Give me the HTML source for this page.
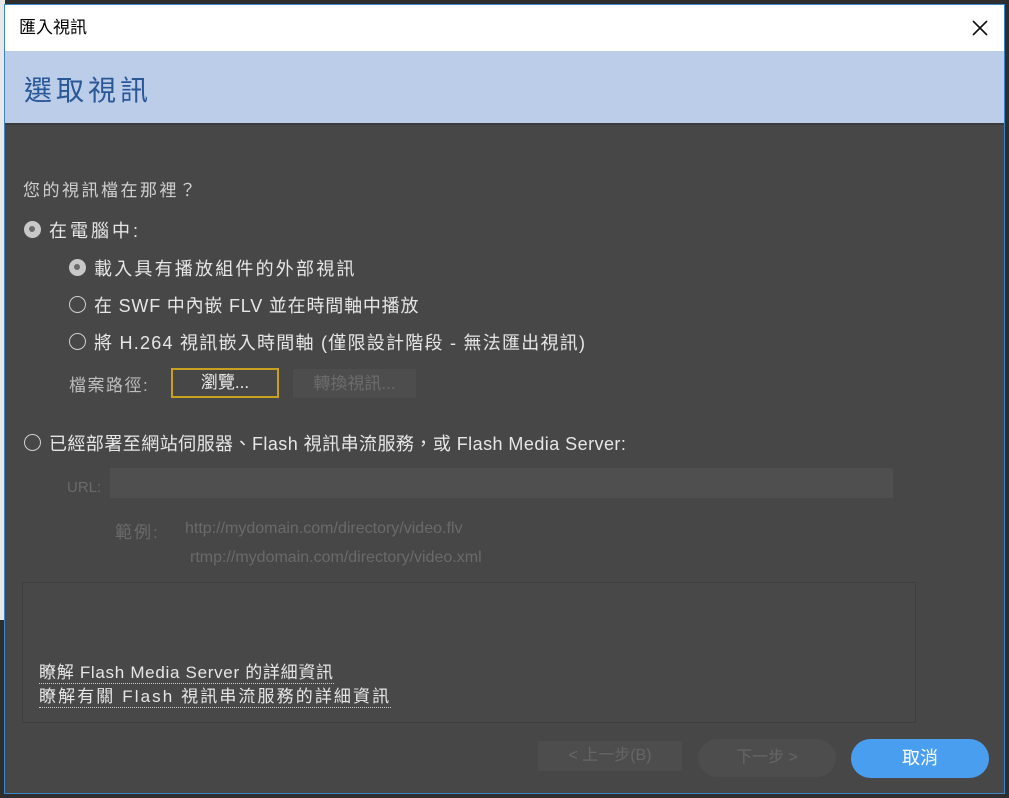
<!DOCTYPE html>
<html><head><meta charset="utf-8"><style>
*{margin:0;padding:0;box-sizing:border-box}
body{width:1009px;height:798px;background:#2e2e2e;position:relative;overflow:hidden;font-family:"Liberation Sans","Noto Sans CJK TC",sans-serif}
.lft{position:absolute;left:0;top:0;width:5px;height:620px;background:#e8e8e8}
.win{position:absolute;left:4px;top:4px;width:1001px;height:790px;border:1px solid #3a86c8;background:#474747}
.tb{position:absolute;left:0;top:0;width:999px;height:46px;background:#fff;color:#000;font-size:17px;line-height:46px;padding-left:14px}
.x{position:absolute;right:14px;top:13px;width:20px;height:20px}
.hd{position:absolute;left:0;top:46px;width:999px;height:74px;background:#bccde9;border-bottom:2px solid #3a3a3a}
.hd span{position:absolute;left:19px;top:18px;font-size:28px;color:#2a5796;letter-spacing:4px}
.t{position:absolute;font-size:18px;color:#e6e6e6;white-space:nowrap;letter-spacing:1.5px}
.r{position:absolute;width:17px;height:17px;border-radius:50%;border:1.5px solid #cfcfcf}
.r.on{background:#c8c8c8;border-color:#c8c8c8}
.r.on::after{content:"";position:absolute;left:4px;top:4px;width:6px;height:6px;border-radius:50%;background:#6a6a6a}
.dim{color:#6a6a6a;letter-spacing:0}
</style></head><body>
<div class="lft"></div>
<div class="win">
<div class="tb">匯入視訊
<svg class="x" viewBox="0 0 20 20"><path d="M3 3L17 17M17 3L3 17" stroke="#111" stroke-width="1.6"/></svg></div>
<div class="hd"><span>選取視訊</span></div>

<div class="t" style="left:18px;top:171px;color:#cfcfcf;font-size:17px;letter-spacing:2.5px">您的視訊檔在那裡？</div>
<div class="r on" style="left:19px;top:216px"></div>
<div class="t" style="left:44px;top:212px;letter-spacing:3px">在電腦中:</div>
<div class="r on" style="left:64px;top:254px"></div>
<div class="t" style="left:89px;top:250px;letter-spacing:2.2px">載入具有播放組件的外部視訊</div>
<div class="r" style="left:64px;top:291px"></div>
<div class="t" style="left:89px;top:287px;letter-spacing:0.8px">在 SWF 中內嵌 FLV 並在時間軸中播放</div>
<div class="r" style="left:64px;top:328px"></div>
<div class="t" style="left:89px;top:324px;letter-spacing:1.25px">將 H.264 視訊嵌入時間軸 (僅限設計階段 - 無法匯出視訊)</div>
<div class="t" style="left:64px;top:366px;color:#bdbdbd;font-size:17px;letter-spacing:1.5px">檔案路徑:</div>
<div style="position:absolute;left:166px;top:363px;width:108px;height:30px;border:2px solid #c9a020;color:#eee;font-size:17px;text-align:center;line-height:26px">瀏覽...</div>
<div style="position:absolute;left:288px;top:364px;width:123px;height:29px;background:#4d4d4d;color:#6c6c6c;font-size:17px;text-align:center;line-height:29px">轉換視訊...</div>
<div class="r" style="left:19px;top:429px"></div>
<div class="t" style="left:44px;top:425px;letter-spacing:0.45px">已經部署至網站伺服器、Flash 視訊串流服務，或 Flash Media Server:</div>
<div class="t dim" style="left:62px;top:474px;font-size:15px">URL:</div>
<div style="position:absolute;left:105px;top:463px;width:783px;height:30px;background:#4f4f4f"></div>
<div class="t dim" style="left:110px;top:513px;font-size:17px;letter-spacing:2px">範例:</div>
<div class="t dim" style="left:180px;top:515px;font-size:16px">http://mydomain.com/directory/video.flv</div>
<div class="t dim" style="left:185px;top:544px;font-size:16px">rtmp://mydomain.com/directory/video.xml</div>

<div style="position:absolute;left:17px;top:577px;width:894px;height:141px;border:1px solid #3e3e3e;background:#484848"></div>
<div class="t" style="left:34px;top:657px;font-size:17px;border-bottom:1px dotted #ccc;line-height:21px;letter-spacing:0.7px">瞭解 Flash Media Server 的詳細資訊</div>
<div class="t" style="left:34px;top:681px;font-size:17px;border-bottom:1px dotted #ccc;line-height:21px;letter-spacing:2.1px">瞭解有關 Flash 視訊串流服務的詳細資訊</div>

<div style="position:absolute;left:533px;top:736px;width:144px;height:30px;background:#4d4d4d;color:#666;font-size:16px;text-align:center;line-height:30px">&lt; 上一步(B)</div>
<div style="position:absolute;left:693px;top:734px;width:138px;height:38px;border-radius:19px;background:#4d4d4d;color:#666;font-size:16px;text-align:center;line-height:38px">下一步 &gt;</div>
<div style="position:absolute;left:846px;top:734px;width:138px;height:39px;border-radius:20px;background:#4a9ef0;color:#fff;font-size:18px;text-align:center;line-height:39px">取消</div>
</div>
</body></html>
